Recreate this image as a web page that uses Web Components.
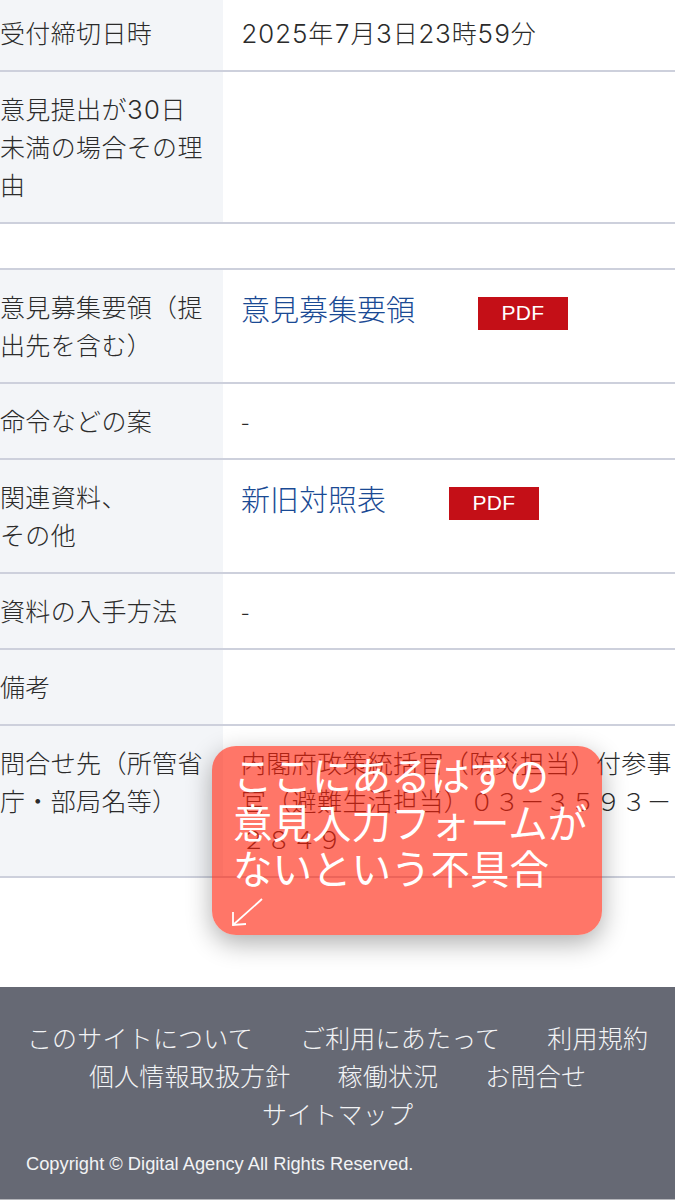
<!DOCTYPE html>
<html lang="ja">
<head>
<meta charset="utf-8">
<style>
  html, body { margin: 0; padding: 0; background: #fff; }
  body { font-family: "Noto Sans CJK JP", "Noto Sans", sans-serif; color: #333; position: relative; height: 1200px; overflow: hidden; }
</style>
</head>
<body>
<info-table>
  <info-row first><span slot="label">受付締切日時</span><wide-num>2025</wide-num>年<wide-num>7</wide-num>月<wide-num>3</wide-num>日<wide-num>23</wide-num>時<wide-num>59</wide-num>分</info-row>
  <info-row><span slot="label">意見提出が<wide-num>30</wide-num>日<br>未満の場合その理<br>由</span></info-row>
</info-table>
<info-table spaced>
  <info-row><span slot="label">意見募集要領（提出先を含む）</span><pdf-link>意見募集要領</pdf-link></info-row>
  <info-row><span slot="label">命令などの案</span>-</info-row>
  <info-row><span slot="label">関連資料、<br>その他</span><pdf-link>新旧対照表</pdf-link></info-row>
  <info-row><span slot="label">資料の入手方法</span>-</info-row>
  <info-row><span slot="label">備考</span></info-row>
  <info-row><span slot="label">問合せ先（所管省庁・部局名等）</span>内閣府政策統括官（防災担当）付参事官（避難生活担当）０３－３５９３－２８４９</info-row>
</info-table>
<site-footer></site-footer>
<note-callout>ここにあるはずの<br>意見入力フォームが<br>ないという不具合</note-callout>

<script>
class WideNum extends HTMLElement {
  connectedCallback() {
    this.attachShadow({ mode: 'open' });
    // no whitespace around the slot: this host is inline
    this.shadowRoot.innerHTML = `<style>:host { font-family: Inter, sans-serif; font-size: 26px; font-weight: 300; letter-spacing: 0; line-height: 1; font-variant-numeric: tabular-nums; }</style><slot></slot>`;
  }
}

class InfoTable extends HTMLElement {
  connectedCallback() {
    this.attachShadow({ mode: 'open' });
    this.shadowRoot.innerHTML = `
      <style>
        :host { display: block; }
        :host([spaced]) { margin-top: 44px; border-top: 2px solid #cdd0dc; }
      </style>
      <slot></slot>
    `;
  }
}

class InfoRow extends HTMLElement {
  connectedCallback() {
    this.attachShadow({ mode: 'open' });
    this.shadowRoot.innerHTML = `
      <style>
        :host {
          display: grid;
          grid-template-columns: 223px 1fr;
          border-bottom: 2px solid #cdd0dc;
          font-size: 25px;
          line-height: 38px;
          font-weight: 300;
          letter-spacing: 0.35px;
          color: #2b2b2b;
        }
        .label {
          background: #f3f5f8;
          padding: 17px 14px 19px 0;
        }
        .value {
          padding: 17px 0 19px 18px;
          min-width: 0;
        }
        :host([first]) .label, :host([first]) .value { padding-top: 13px; }
      </style>
      <div class="label"><slot name="label"></slot></div>
      <div class="value"><slot></slot></div>
    `;
  }
}

class PdfLink extends HTMLElement {
  connectedCallback() {
    this.attachShadow({ mode: 'open' });
    this.shadowRoot.innerHTML = `
      <style>
        :host { display: flex; align-items: flex-start; gap: 63px; height: 44px; margin-top: -1px; }
        a { color: #1a4a94; font-size: 29px; font-weight: 300; letter-spacing: 0; text-decoration: none; line-height: 44px; }
        .badge {
          display: flex; align-items: center; justify-content: center;
          width: 90px; height: 33px;
          box-sizing: border-box;
          padding-bottom: 2px;
          background: #c40f17; color: #fff;
          font-size: 21px; line-height: 31px;
          font-family: "Liberation Sans", sans-serif;
          margin-top: 11px;
        }
      </style>
      <a href="#"><slot></slot></a>
      <span class="badge">PDF</span>
    `;
  }
}

class SiteFooter extends HTMLElement {
  connectedCallback() {
    this.attachShadow({ mode: 'open' });
    this.shadowRoot.innerHTML = `
      <style>
        :host {
          display: block;
          margin-top: 109px;
          height: 213px;
          box-sizing: border-box;
          background: #666974;
          border-bottom: 1px solid #b5b6bb;
          color: #f2f3f5;
          padding-top: 31px;
          font-weight: 300;
        }
        nav {
          display: flex; flex-wrap: wrap; justify-content: center;
          column-gap: 47px;
          font-size: 25px; line-height: 38px;
          letter-spacing: 0.2px;
          padding: 0 20px;
        }
        a { color: inherit; text-decoration: none; }
        p {
          margin: 19px 0 0 26px;
          font: 18.3px/26px "Liberation Sans", sans-serif;
        }
      </style>
      <nav>
        <a href="#">このサイトについて</a>
        <a href="#">ご利用にあたって</a>
        <a href="#">利用規約</a>
        <a href="#">個人情報取扱方針</a>
        <a href="#">稼働状況</a>
        <a href="#">お問合せ</a>
        <a href="#">サイトマップ</a>
      </nav>
      <p>Copyright © Digital Agency All Rights Reserved.</p>
    `;
  }
}

class NoteCallout extends HTMLElement {
  connectedCallback() {
    this.attachShadow({ mode: 'open' });
    this.shadowRoot.innerHTML = `
      <style>
        :host {
          position: absolute;
          left: 212px; top: 746px;
          width: 390px; height: 189px;
          box-sizing: border-box;
          padding: 5px 0 0 21px;
          border-radius: 24px;
          background: rgba(255, 31, 8, 0.61);
          box-shadow: 0 8px 26px rgba(0, 0, 0, 0.32);
          color: #fff;
          font-size: 39.5px;
          line-height: 46.5px;
          font-weight: 400;
        }
        svg { display: block; margin: 6px 0 0 -2px; }
      </style>
      <slot></slot>
      <svg width="34" height="30" viewBox="0 0 34 30" fill="none" stroke="#fff" stroke-width="1.8">
        <path d="M31 2 L2 28"/>
        <path d="M2 15 L2 28 L15 27"/>
      </svg>
    `;
  }
}

customElements.define('wide-num', WideNum);
customElements.define('info-table', InfoTable);
customElements.define('info-row', InfoRow);
customElements.define('pdf-link', PdfLink);
customElements.define('site-footer', SiteFooter);
customElements.define('note-callout', NoteCallout);
</script>
</body>
</html>
